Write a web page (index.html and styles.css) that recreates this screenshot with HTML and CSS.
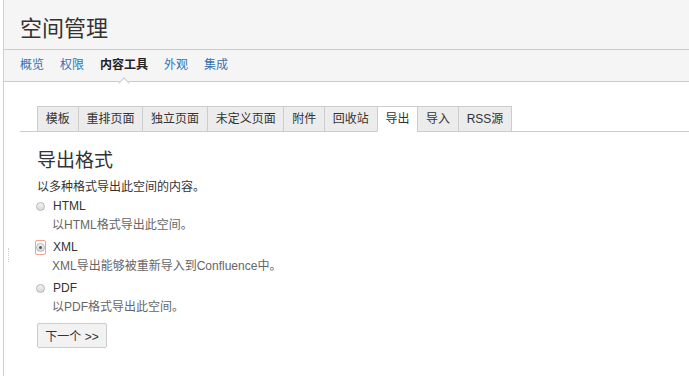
FILE: index.html
```html
<!DOCTYPE html>
<html lang="zh-CN">
<head>
<meta charset="utf-8">
<title>空间管理</title>
<link rel="stylesheet" href="styles.css">
</head>
<body>
<div class="page">
  <header class="hd"><h1 class="title">空间管理</h1></header>
  <nav class="subnav">
    <a class="nav-item">概览</a>
    <a class="nav-item">权限</a>
    <span class="nav-item active">内容工具</span>
    <a class="nav-item">外观</a>
    <a class="nav-item">集成</a>
  </nav>
  <main class="content">
    <ul class="tabs">
      <li class="tab">模板</li>
      <li class="tab">重排页面</li>
      <li class="tab">独立页面</li>
      <li class="tab">未定义页面</li>
      <li class="tab">附件</li>
      <li class="tab">回收站</li>
      <li class="tab current">导出</li>
      <li class="tab">导入</li>
      <li class="tab">RSS源</li>
    </ul>
    <section class="pane">
      <h2 class="pane-title">导出格式</h2>
      <p class="intro">以多种格式导出此空间的内容。</p>
      <div class="opt"><span class="radio"></span><span class="opt-label">HTML</span></div>
      <p class="desc">以HTML格式导出此空间。</p>
      <div class="opt"><span class="radio checked"></span><span class="opt-label">XML</span></div>
      <p class="desc">XML导出能够被重新导入到Confluence中。</p>
      <div class="opt"><span class="radio"></span><span class="opt-label">PDF</span></div>
      <p class="desc">以PDF格式导出此空间。</p>
      <button class="btn" type="button">下一个 &gt;&gt;</button>
    </section>
    <span class="grip"></span>
  </main>
</div>
</body>
</html>
```
FILE: styles.css
```css
html, body {
  margin: 0;
  padding: 0;
  background: #ffffff;
}
body {
  font-family: "Liberation Sans", "Noto Sans CJK SC", sans-serif;
  color: #333333;
  font-size: 12px;
  padding-left: 3px;
}
.page {
  border-left: 1px solid #cfcfcf;
  min-height: 376px;
  box-sizing: border-box;
}
.hd {
  background: #f5f5f5;
  height: 49px;
  border-bottom: 1px solid #cccccc;
  display: flex;
  align-items: center;
  padding-left: 16px;
}
.title {
  margin: 0;
  font-weight: normal;
  font-size: 22px;
  line-height: 28px;
  color: #333333;
  font-family: "Noto Sans CJK SC", sans-serif;
  padding-top: 2px;
}
.subnav {
  background: #f5f5f5;
  height: 28px;
  padding-bottom: 3px;
  border-bottom: 1px solid #cccccc;
  display: flex;
  align-items: center;
  gap: 16px;
  padding-left: 16px;
  font-size: 12px;
  line-height: 16px;
}
.nav-item {
  color: #3572b0;
  font-family: "Noto Sans CJK SC", sans-serif;
  position: relative;
}
.nav-item.active {
  color: #222222;
  font-weight: bold;
}
.nav-item.active::after {
  content: "";
  position: absolute;
  left: 50%;
  bottom: -15px;
  width: 7px;
  height: 7px;
  margin-left: -4px;
  background: #ffffff;
  border-top: 1px solid #cccccc;
  border-left: 1px solid #cccccc;
  transform: rotate(45deg);
}
.content {
  padding: 24px 0 0 16px;
  position: relative;
}
.tabs {
  list-style: none;
  margin: 0;
  padding: 0 0 0 17px;
  display: flex;
  border-bottom: 1px solid #cccccc;
}
.tab {
  height: 24px;
  line-height: 24px;
  padding: 0 7.8px;
  background: #ececec;
  border-top: 1px solid #cccccc;
  border-left: 1px solid #cccccc;
  margin-bottom: -1px;
  border-bottom: 1px solid #cccccc;
  font-size: 12px;
  color: #333333;
  font-family: "Liberation Sans", "Noto Sans CJK SC", sans-serif;
}
.tab:last-child {
  border-right: 1px solid #cccccc;
}
.tab.current {
  background: #ffffff;
  border-bottom-color: #ffffff;
}
.pane {
  padding-left: 17px;
}
.pane-title {
  margin: 15px 0 0;
  font-weight: normal;
  font-size: 19px;
  line-height: 24px;
  color: #333333;
  font-family: "Noto Sans CJK SC", sans-serif;
}
.intro {
  margin: 7px 0 0;
  font-size: 12px;
  line-height: 19px;
  color: #333333;
}
.opt {
  display: flex;
  align-items: center;
  height: 19px;
  margin-top: 0;
}
.desc + .opt {
  margin-top: 3px;
}
.radio {
  width: 9px;
  height: 9px;
  border-radius: 50%;
  border: 1px solid #b5b5b5;
  background: linear-gradient(#f4f4f4, #d8d8d8);
  box-sizing: border-box;
  margin-left: -1px;
  margin-right: 7px;
  position: relative;
  flex: none;
}
.radio.checked::before {
  content: "";
  position: absolute;
  left: 2px;
  top: 2px;
  width: 3px;
  height: 3px;
  border-radius: 50%;
  background: #555555;
}
.radio.checked::after {
  content: "";
  position: absolute;
  left: -2px;
  right: -2px;
  top: -4px;
  bottom: -4px;
  border: 1px solid #eea48f;
  border-radius: 2px;
}
.opt-label {
  font-size: 12px;
  line-height: 19px;
  color: #333333;
  padding-left: 1px;
}
.desc {
  margin: 0;
  padding-left: 15px;
  font-size: 12px;
  line-height: 19px;
  color: #666666;
}
.btn {
  margin-top: 6px;
  height: 25px;
  width: 70px;
  padding: 0;
  background: #f2f2f2;
  border: 1px solid #cccccc;
  border-radius: 2px;
  font-size: 12px;
  color: #333333;
  font-family: "Liberation Sans", "Noto Sans CJK SC", sans-serif;
  display: block;
}
.grip {
  position: absolute;
  left: 4px;
  top: 166px;
  width: 1px;
  height: 14px;
  border-left: 1px dotted #d0d0d0;
}
```
